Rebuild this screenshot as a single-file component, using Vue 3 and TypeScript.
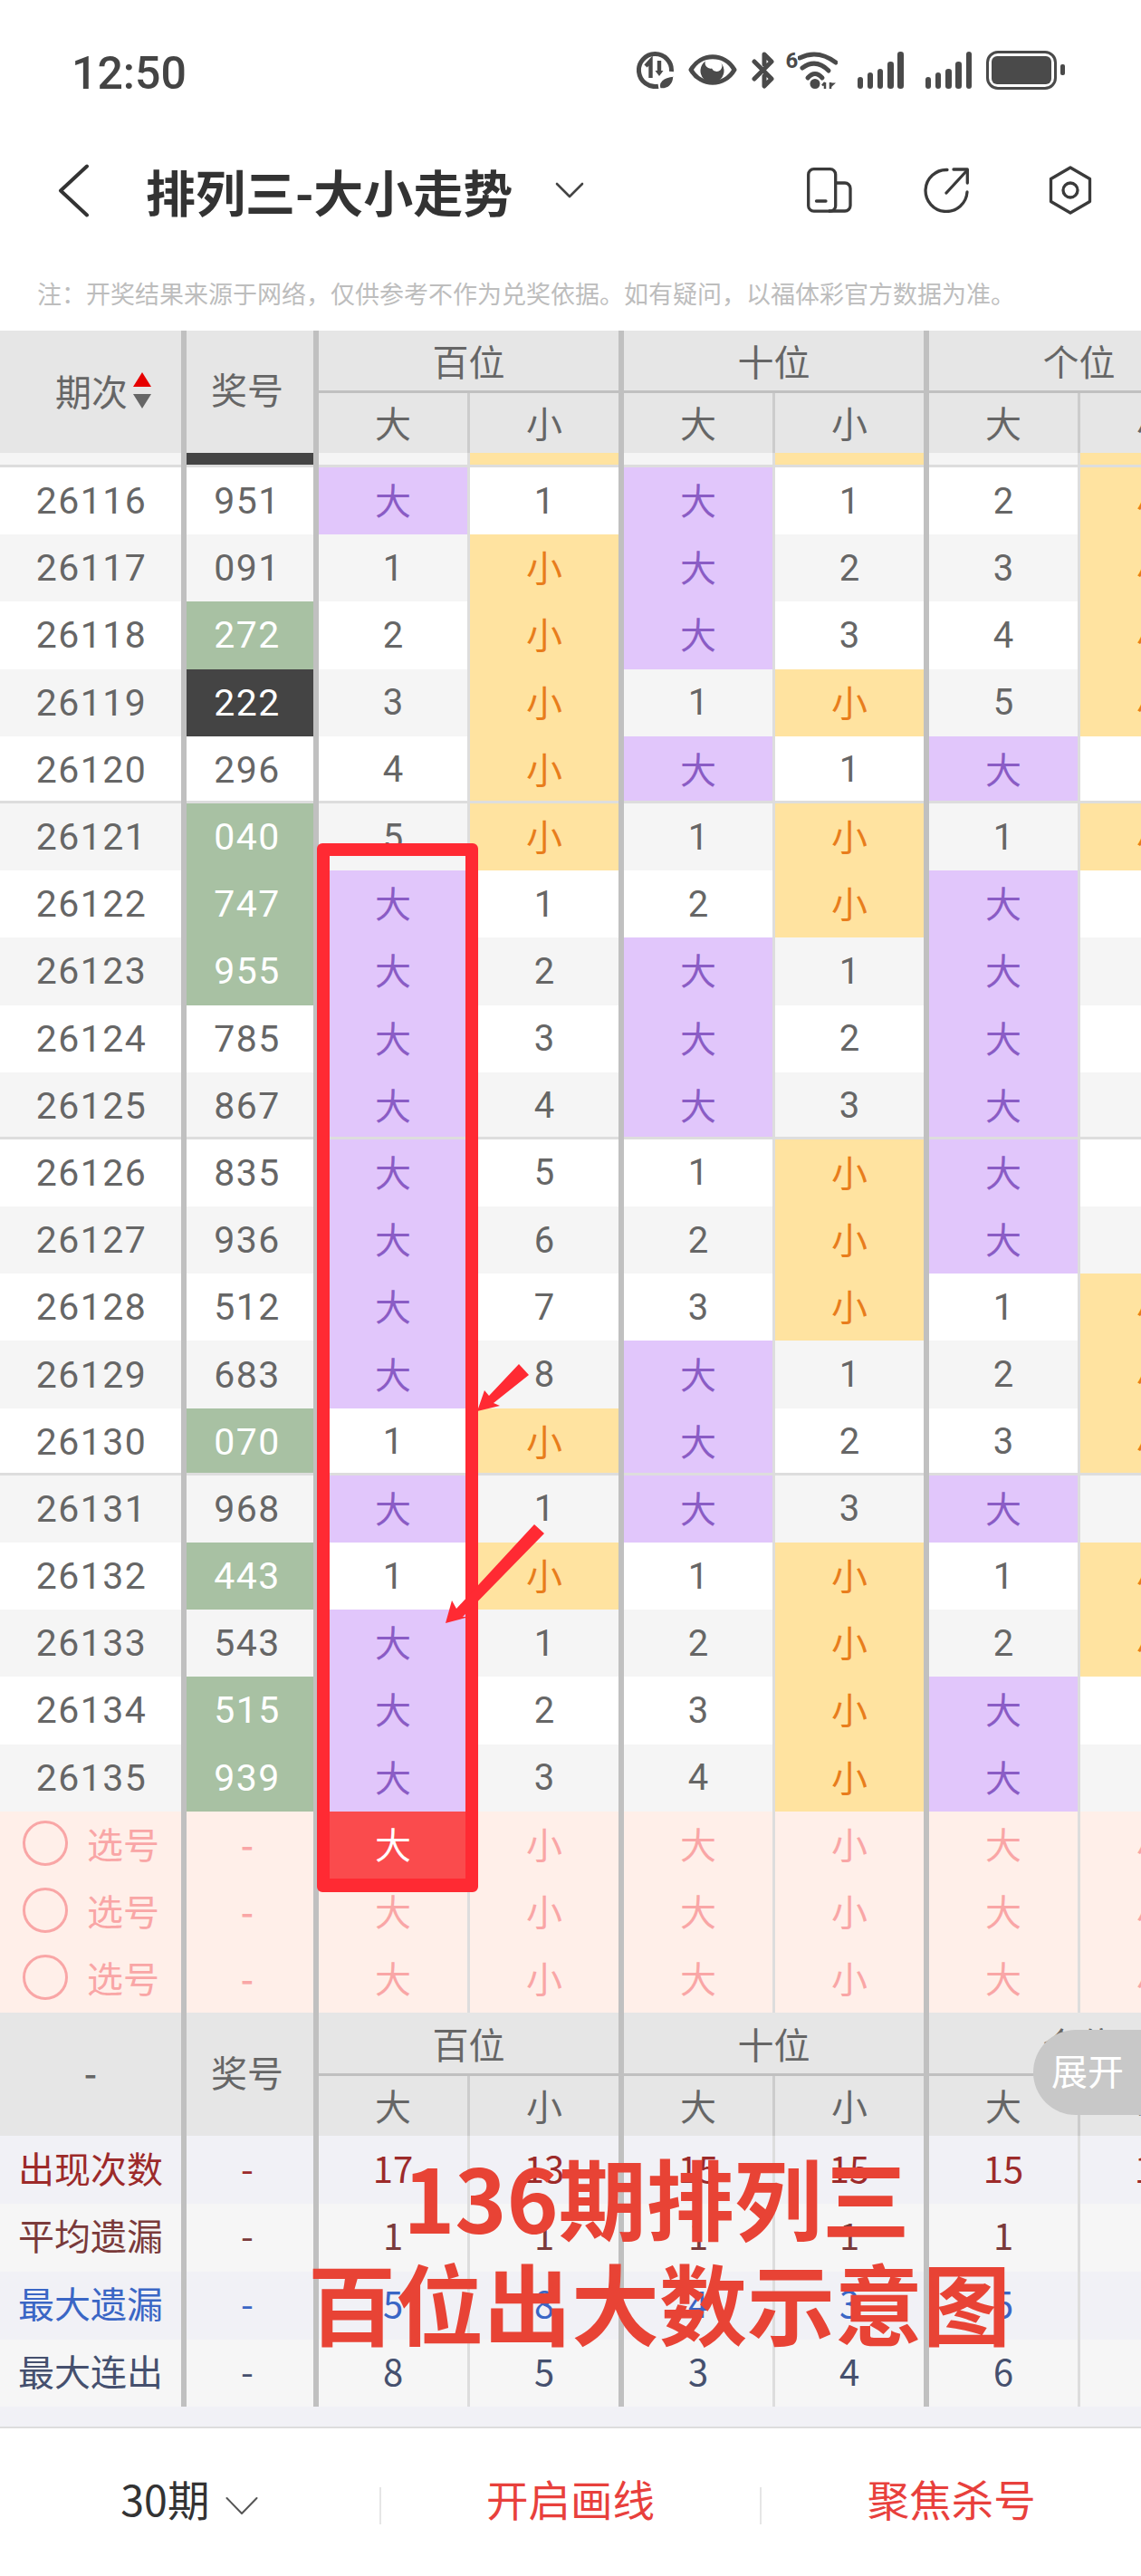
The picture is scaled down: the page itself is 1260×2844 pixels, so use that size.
<script setup lang="ts">
type Side = { text: string; hit: boolean };

const draws: [string, string][] = [
  ['26116', '951'], ['26117', '091'], ['26118', '272'], ['26119', '222'], ['26120', '296'],
  ['26121', '040'], ['26122', '747'], ['26123', '955'], ['26124', '785'], ['26125', '867'],
  ['26126', '835'], ['26127', '936'], ['26128', '512'], ['26129', '683'], ['26130', '070'],
  ['26131', '968'], ['26132', '443'], ['26133', '543'], ['26134', '515'], ['26135', '939'],
];

// misses carried in from before the first visible row
const bigMiss = [0, 0, 1];
const smallMiss = [0, 0, 0];

const rows = draws.map(([issue, num], i) => {
  const cells: { big: Side; small: Side }[] = [];
  num.split('').forEach((d, p) => {
    const isBig = Number(d) >= 5;
    bigMiss[p] = isBig ? 0 : bigMiss[p] + 1;
    smallMiss[p] = isBig ? smallMiss[p] + 1 : 0;
    cells.push({
      big: { text: isBig ? '大' : String(bigMiss[p]), hit: isBig },
      small: { text: isBig ? String(smallMiss[p]) : '小', hit: !isBig },
    });
  });
  const kinds = new Set(num.split('')).size;
  return {
    issue,
    num,
    cells,
    numClass: kinds === 1 ? 'leopard' : kinds === 2 ? 'pair' : '',
    even: i % 2 === 1,
    groupEnd: i % 5 === 4 && i < draws.length - 1,
  };
});

const positions = ['百位', '十位', '个位'];
const stats = [
  { label: '出现次数', cls: 's-count', values: [17, 13, 15, 15, 15, 15] },
  { label: '平均遗漏', cls: 's-avg', values: [1, 1, 1, 1, 1, 1] },
  { label: '最大遗漏', cls: 's-miss', values: [5, 8, 4, 3, 5, 4] },
  { label: '最大连出', cls: 's-run', values: [8, 5, 3, 4, 6, 4] },
];
const bars = [13, 18, 22, 30, 41];
</script>

<template>
  <div class="app">
    <div class="status">
      <span class="clock">12:50</span>
      <div class="status-icons">
        <svg width="41" height="41" viewBox="0 0 41 41" fill="none" stroke="#4a4a4a">
          <path d="M24 38.2A18 18 0 1 1 38.4 22" stroke-width="5" />
          <path d="M10 16l5.5-6V29" stroke-width="4.4" />
          <path d="M25 10V24" stroke-width="4.4" />
          <path d="M20.5 21h9L25 27z" fill="#4a4a4a" stroke="none" />
          <path d="M26 41c-3-7 3-13 15-14 0 9-6 15-15 14z" fill="#4a4a4a" stroke="#fff" stroke-width="1.5" />
        </svg>
        <svg width="54" height="36" viewBox="0 0 54 36" fill="none">
          <path d="M3 18C14 -1 40 -1 51 18 40 37 14 37 3 18z" stroke="#4a4a4a" stroke-width="5" stroke-linejoin="round" />
          <path d="M19 8.500a13 13 0 1 0 15 0 6 6 0 1 1-8 8 6 6 0 0 1-7-8z" fill="#4a4a4a" />
        </svg>
        <svg width="25" height="41" viewBox="0 0 25 41" fill="none" stroke="#4a4a4a" stroke-width="5" stroke-linecap="round" stroke-linejoin="round">
          <path d="M3 11L22 30 14 38V27" />
          <path d="M14 14V3L22 11 3 30" />
        </svg>
        <div class="wifi">
          <span class="wifi-gen">6</span>
          <svg width="44" height="41" viewBox="0 0 44 41" fill="none" stroke="#4a4a4a" stroke-width="5" stroke-linecap="round">
            <path d="M2 7Q22 -3 42 12" />
            <path d="M5 18Q20 7 34 21" />
            <path d="M11 29Q19 20 27 29" />
            <circle cx="19" cy="35.500" r="5.500" fill="#4a4a4a" stroke="none" />
            <path d="M30 41V34M27 37.500L30 34M36 34V41" stroke-width="2.500" stroke-linecap="butt" />
            <path d="M36 40L42 34.500H36z" fill="#4a4a4a" stroke="none" />
          </svg>
        </div>
        <div class="signal">
          <i v-for="h in bars" :key="h" :style="{ height: h + 'px' }"></i>
        </div>
        <div class="signal signal-second">
          <i v-for="h in bars" :key="h" :style="{ height: h + 'px' }"></i>
        </div>
        <div class="battery"><b></b></div>
        <span class="battery-nub"></span>
      </div>
    </div>

    <div class="nav">
      <svg class="back" width="35" height="59" viewBox="0 0 35 59" fill="none" stroke="#333" stroke-width="4" stroke-linecap="round" stroke-linejoin="round">
        <path d="M32 2.500L3 29.500 32 56.500" />
      </svg>
      <h1 class="title">排列三-大小走势</h1>
      <svg class="title-arrow" width="32" height="18" viewBox="0 0 32 18" fill="none" stroke="#444" stroke-width="2.600" stroke-linecap="round" stroke-linejoin="round">
        <path d="M2 2L16 16 30 2" />
      </svg>
      <div class="nav-icons">
        <svg width="50" height="50" viewBox="0 0 50 50" fill="none" stroke="#3a3a3a" stroke-width="3.300" stroke-linejoin="round">
          <rect x="1.700" y="1.700" width="30" height="46.500" rx="6" />
          <path d="M32 17H42a6 6 0 0 1 6 6V42a6 6 0 0 1-6 6H24" />
          <path d="M10.500 37H21" stroke-linecap="round" />
        </svg>
        <svg width="50" height="50" viewBox="0 0 50 50" fill="none" stroke="#3a3a3a" stroke-width="3.300" stroke-linecap="round" stroke-linejoin="round">
          <path d="M26 2.500A23 23 0 1 0 48 27" />
          <path d="M25 28L48 3" />
          <path d="M33 2H48.300V17" />
        </svg>
        <svg width="48" height="54" viewBox="0 0 48 54" fill="none" stroke="#3a3a3a" stroke-width="3.300" stroke-linejoin="round">
          <path d="M24 2L45.500 14.500V39.500L24 52 2.500 39.500V14.500z" />
          <circle cx="24" cy="27" r="8" />
        </svg>
      </div>
    </div>

    <p class="note">注：开奖结果来源于网络，仅供参考不作为兑奖依据。如有疑问，以福体彩官方数据为准。</p>

    <div class="table">
      <div class="head grid">
        <div class="h-cell h-span h-issue">
          <span>期次</span>
          <span class="sort"><i class="up"></i><i class="down"></i></span>
        </div>
        <div class="h-cell h-span h-num">奖号</div>
        <div v-for="p in positions" :key="p" class="h-cell h-group">{{ p }}</div>
        <template v-for="p in positions" :key="p">
          <div class="h-cell h-sub">大</div>
          <div class="h-cell h-sub end">小</div>
        </template>
      </div>

      <div class="grid peek">
        <div class="cell issue even"></div>
        <div class="cell num leopard"></div>
        <template v-for="p in positions" :key="p">
          <div class="cell big even"></div>
          <div class="cell small hit-small"></div>
        </template>
      </div>

      <div v-for="r in rows" :key="r.issue" class="grid row" :class="{ 'group-end': r.groupEnd }">
        <div class="cell issue digits" :class="{ even: r.even }">{{ r.issue }}</div>
        <div class="cell num digits" :class="[r.numClass, { even: r.even }]">{{ r.num }}</div>
        <template v-for="(c, i) in r.cells" :key="i">
          <div class="cell big" :class="{ even: r.even, 'hit-big': c.big.hit }">{{ c.big.text }}</div>
          <div class="cell small" :class="{ even: r.even, 'hit-small': c.small.hit }">{{ c.small.text }}</div>
        </template>
      </div>

      <div v-for="n in 3" :key="n" class="grid row pick">
        <div class="cell issue pick-label"><span class="radio"></span>选号</div>
        <div class="cell num dash">-</div>
        <template v-for="(p, i) in positions" :key="p">
          <div class="cell big" :class="{ picked: n === 1 && i === 0 }">大</div>
          <div class="cell small">小</div>
        </template>
      </div>

      <div class="head foot-head grid">
        <div class="h-cell h-span dash">-</div>
        <div class="h-cell h-span h-num">奖号</div>
        <div v-for="p in positions" :key="p" class="h-cell h-group">{{ p }}</div>
        <template v-for="p in positions" :key="p">
          <div class="h-cell h-sub">大</div>
          <div class="h-cell h-sub end">小</div>
        </template>
      </div>

      <div v-for="(s, i) in stats" :key="s.label" class="grid stat" :class="[s.cls, { alt: i % 2 === 1 }]">
        <div class="cell issue">{{ s.label }}</div>
        <div class="cell num">-</div>
        <template v-for="(v, j) in s.values" :key="j">
          <div class="cell" :class="j % 2 ? 'small' : 'big'">{{ v }}</div>
        </template>
      </div>
      <div class="table-end"></div>
    </div>

    <div class="footer">
      <div class="foot-item">
        <span>30期</span>
        <svg width="36" height="21" viewBox="0 0 36 21" fill="none" stroke="#555" stroke-width="2" stroke-linecap="round" stroke-linejoin="round">
          <path d="M1.500 2L18 19 34.500 2" />
        </svg>
      </div>
      <div class="foot-item red"><span>开启画线</span></div>
      <div class="foot-item red"><span>聚焦杀号</span></div>
    </div>

    <!-- hand drawn markup on top of the screenshot -->
    <div class="mark-box"></div>
    <svg class="mark-arrows" width="1260" height="2844" viewBox="0 0 1260 2844">
      <path d="M573 1506L584 1518 545 1549 552 1552 527 1558 535 1535 540 1541z" fill="#ff2a33" />
      <path d="M590 1683L601 1693 511 1785 518 1785 492 1792 499 1767 504 1776z" fill="#ff2a33" />
    </svg>
    <div class="mark-text">136期排列三<br />百位出大数示意图</div>
    <div class="expand">展开</div>
  </div>
</template>

<style scoped>
.app {
  position: relative;
  width: 1260px;
  height: 2844px;
  overflow: hidden;
  background: #fff;
  font-family: Roboto, "Noto Sans CJK SC", sans-serif;
  color: #666;
}

.status {
  box-sizing: border-box;
  height: 144px;
  padding: 58px 84px 0 79px;
  display: flex;
  justify-content: space-between;
  align-items: flex-start;
}

.clock {
  font-size: 50px;
  font-weight: 500;
  line-height: 46px;
  color: #444;
}

.status-icons {
  display: flex;
  align-items: center;
  height: 42px;
  margin-top: -2px;
}

.status-icons > svg:nth-child(2) {
  margin-left: 16px;
}

.status-icons > svg:nth-child(3) {
  margin-left: 16px;
}

.wifi {
  display: flex;
  align-items: flex-start;
  margin-left: 13px;
  height: 41px;
}

.wifi-gen {
  width: 13px;
  font-size: 24px;
  line-height: 20px;
  font-weight: 700;
  color: #4a4a4a;
}

.signal {
  display: flex;
  align-items: flex-end;
  gap: 4.700px;
  height: 41px;
  margin-left: 22px;
}

.signal i {
  width: 6.500px;
  border-radius: 3.200px;
  background: #4a4a4a;
}

.signal-second {
  margin-left: 24px;
}

.battery {
  box-sizing: border-box;
  width: 78px;
  height: 43px;
  margin-left: 16px;
  padding: 3px;
  border: 3.500px solid #4a4a4a;
  border-radius: 13px;
}

.battery b {
  display: block;
  height: 100%;
  border-radius: 6px;
  background: #4a4a4a;
}

.battery-nub {
  width: 5px;
  height: 12px;
  margin-left: 4px;
  border-radius: 2px;
  background: #4a4a4a;
}

.nav {
  height: 132px;
  padding-left: 64px;
  padding-right: 54px;
  display: flex;
  align-items: center;
}

.back {
  flex: none;
}

.title {
  margin: 0 0 0 62px;
  font-family: "Noto Sans CJK SC", sans-serif;
  font-size: 55px;
  font-weight: 700;
  line-height: 60px;
  color: #333;
  white-space: nowrap;
}

.title-arrow {
  margin-left: 47px;
  flex: none;
}

.nav-icons {
  margin-left: auto;
  display: flex;
  align-items: center;
  gap: 79px;
}

.nav-icons svg:last-child {
  margin-left: 9px;
}

.note {
  box-sizing: border-box;
  height: 89px;
  margin: 0;
  padding: 30px 0 0 41px;
  font-family: "Noto Sans CJK SC", sans-serif;
  font-size: 27px;
  line-height: 36px;
  color: #bdbdbd;
  white-space: nowrap;
}

.table {
  overflow: hidden;
}

.grid {
  display: grid;
  grid-template-columns: 206px 146px 167px 170px 167px 170px 167px 170px;
}

.head {
  grid-template-rows: 69px 66px;
  background: #e6e6e6;
  font-size: 40px;
}

.foot-head {
  grid-template-rows: 70px 66px;
}

.h-cell {
  box-sizing: border-box;
  display: flex;
  align-items: center;
  justify-content: center;
  border-right: 6px solid #c0c0c0;
  color: #666;
}

.h-span {
  grid-row: span 2;
  padding-bottom: 7px;
}

.h-issue {
  padding-bottom: 3px;
  gap: 6px;
  padding-left: 28px;
  border-right-width: 6px;
}

.h-num {
  padding-right: 6px;
}

.h-group {
  grid-column: span 2;
  border-bottom: 3px solid #c0c0c0;
}

.h-sub {
  border-right: 3px solid #ccc;
  padding-bottom: 3px;
}

.h-sub.end {
  border-right: 6px solid #c0c0c0;
}

.dash {
  font-family: "Noto Sans CJK SC", sans-serif;
  font-weight: 500;
}

.sort {
  display: flex;
  flex-direction: column;
  gap: 8px;
}

.sort i {
  display: block;
  width: 0;
  height: 0;
  border-left: 10px solid transparent;
  border-right: 10px solid transparent;
}

.sort .up {
  border-bottom: 16px solid #e60000;
}

.sort .down {
  border-top: 16px solid #666;
}

.peek {
  height: 16px;
}

.peek .cell {
  box-shadow: inset 0 -3px 0 #ddd;
}

.row {
  height: 74.200px;
}

.cell {
  box-sizing: border-box;
  display: flex;
  align-items: center;
  justify-content: center;
  background: #fff;
  font-size: 41px;
  border-right: 3px solid #ddd;
  color: #666;
}

.digits {
  letter-spacing: 1.500px;
}

.issue.digits {
  padding-left: 2px;
}

.cell.even {
  background: #f5f5f5;
}

.group-end .cell {
  box-shadow: inset 0 -3px 0 #ddd;
}

.issue {
  border-right: 6px solid #c0c0c0;
}

.num {
  padding-right: 6px;
  border-right: 6px solid #c0c0c0;
}

.big {
  font-size: 40px;
}

.small {
  font-size: 40px;
  border-right: 6px solid #c0c0c0;
}

.num.pair,
.num.pair.even {
  background: #a8c1a3;
  color: #fff;
}

.num.leopard {
  background: #444;
  color: #fff;
}

.cell.hit-big {
  padding-bottom: 4px;
  background: #e1c6fb;
  color: #8a5cc5;
}

.cell.hit-small {
  padding-bottom: 4px;
  background: #ffe3a0;
  color: #e87d1c;
}

.pick .cell {
  padding-bottom: 4px;
  background: #ffefe9;
  color: #f9a6a6;
  font-size: 40px;
}

.pick .pick-label {
  justify-content: flex-start;
  padding-left: 25px;
  gap: 21px;
}

.radio {
  box-sizing: border-box;
  width: 50px;
  height: 50px;
  border: 3px solid #f9a6a6;
  border-radius: 50%;
}

.pick .cell.picked {
  background: #fa4b4d;
  color: #fff;
}

.stat {
  height: 74.750px;
}

.stat .cell {
  padding-bottom: 6px;
  font-family: "Noto Sans CJK SC", sans-serif;
  font-size: 40px;
  background: #f1f1f6;
}

.stat.alt .cell {
  background: #f6f6f6;
}

.s-count .cell {
  color: #9c2a2a;
}

.s-avg .cell {
  color: #7a3a3a;
}

.s-miss .cell {
  color: #3a66c5;
}

.s-run .cell {
  color: #45506e;
}

.table-end {
  box-sizing: border-box;
  height: 24px;
  background: #f1f1f6;
  border-bottom: 2px solid #ddd;
}

.footer {
  display: flex;
  height: 163px;
  padding-top: 7px;
  box-sizing: border-box;
  align-items: center;
  background: #fff;
}

.foot-item {
  flex: 1;
  height: 41px;
  display: flex;
  align-items: center;
  justify-content: center;
  gap: 18px;
  font-family: "Noto Sans CJK SC", sans-serif;
  font-size: 46.500px;
  color: #333;
}

.foot-item span {
  margin-bottom: 18px;
}

.foot-item + .foot-item {
  border-left: 2px solid #e6e6e6;
}

.foot-item.red {
  color: #e8403c;
}

.mark-box {
  position: absolute;
  left: 350px;
  top: 931px;
  box-sizing: border-box;
  width: 178px;
  height: 1158px;
  border: 14px solid #ff2a33;
  border-bottom-width: 15px;
  border-radius: 6px;
}

.mark-arrows {
  position: absolute;
  left: 0;
  top: 0;
}

.mark-text {
  position: absolute;
  left: 340px;
  top: 2366px;
  width: 770px;
  font-family: "Noto Sans CJK SC", sans-serif;
  font-size: 97px;
  font-weight: 700;
  line-height: 116px;
  color: #e84335;
  text-align: center;
  white-space: nowrap;
}

.expand {
  position: absolute;
  right: 0;
  top: 2241px;
  box-sizing: border-box;
  width: 119px;
  height: 94px;
  padding: 0 0 6px 20px;
  display: flex;
  align-items: center;
  border-radius: 47px 0 0 47px;
  background: #c8c8c8;
  font-family: "Noto Sans CJK SC", sans-serif;
  font-size: 40px;
  color: #fff;
  white-space: nowrap;
}
</style>
